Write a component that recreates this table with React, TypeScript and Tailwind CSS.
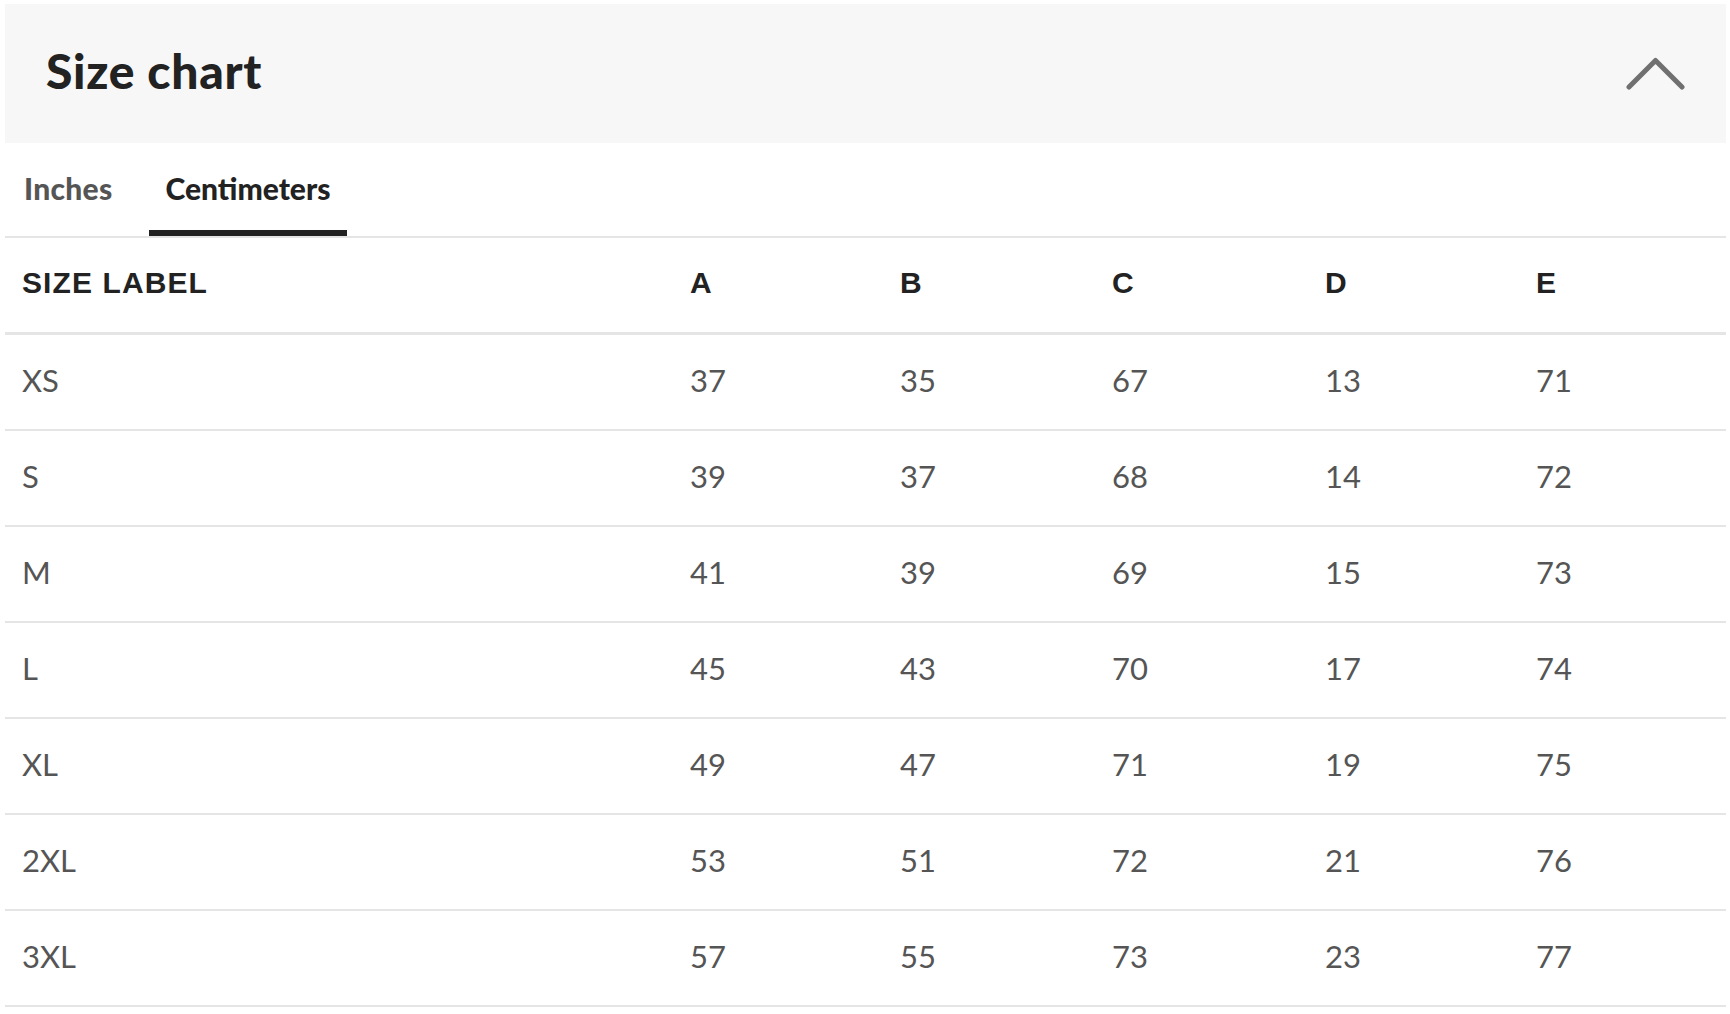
import React from "react";

const rows: [string, number, number, number, number, number][] = [
  ["XS", 37, 35, 67, 13, 71],
  ["S", 39, 37, 68, 14, 72],
  ["M", 41, 39, 69, 15, 73],
  ["L", 45, 43, 70, 17, 74],
  ["XL", 49, 47, 71, 19, 75],
  ["2XL", 53, 51, 72, 21, 76],
  ["3XL", 57, 55, 73, 23, 77],
];

const heads = ["SIZE LABEL", "A", "B", "C", "D", "E"];

export default function App() {
  return (
    <div className="w-[1730px] h-[1014px] bg-white pt-[4px] pl-[5px] pr-[4px] overflow-hidden font-['Lato',sans-serif]">
      <div className="h-[139px] bg-[#f7f7f7] flex items-center justify-between pl-[41px] pr-[40px]">
        <h2 className="text-[48px] font-black text-[#222222] leading-none tracking-[0.7px] mb-[6px]">Size chart</h2>
        <svg width="60" height="36" viewBox="0 0 60 36" fill="none" className="mb-[2px]">
          <polyline
            points="3,32 29.5,5.5 56,32"
            stroke="#707070"
            strokeWidth="5"
            strokeLinecap="round"
            strokeLinejoin="round"
          />
        </svg>
      </div>

      <div className="flex h-[95px] border-b-2 border-[#e5e5e5]">
        <button className="ml-[3px] w-[121px] h-full px-[16px] flex items-center pt-[4px] border-b-[6px] border-transparent text-[30px] font-black text-[#555555] text-left whitespace-nowrap tracking-[0.3px]">
          Inches
        </button>
        <button className="ml-[20px] w-[198px] h-full flex items-center justify-center pt-[4px] border-b-[6px] border-[#222222] text-[30px] font-black text-[#222222] whitespace-nowrap">
          Centimeters
        </button>
      </div>

      <div className="grid grid-cols-[668px_210px_212px_213px_211px_1fr] h-[97px] border-b-[3px] border-[#e5e5e5]">
        {heads.map((h) => (
          <div
            key={h}
            className="flex items-center pl-[17px] pb-[6px] font-['Liberation_Sans',Arial,sans-serif] font-bold text-[30px] tracking-[1.1px] text-[#222222]"
          >
            {h}
          </div>
        ))}
      </div>

      {rows.map((r) => (
        <div
          key={r[0]}
          className="grid grid-cols-[668px_210px_212px_213px_211px_1fr] h-[96px] border-b-2 border-[#e5e5e5]"
        >
          {r.map((c, i) => (
            <div key={i} className="flex items-center pl-[17px] pb-[4px] text-[31px] text-[#555555]">
              {c}
            </div>
          ))}
        </div>
      ))}
    </div>
  );
}
